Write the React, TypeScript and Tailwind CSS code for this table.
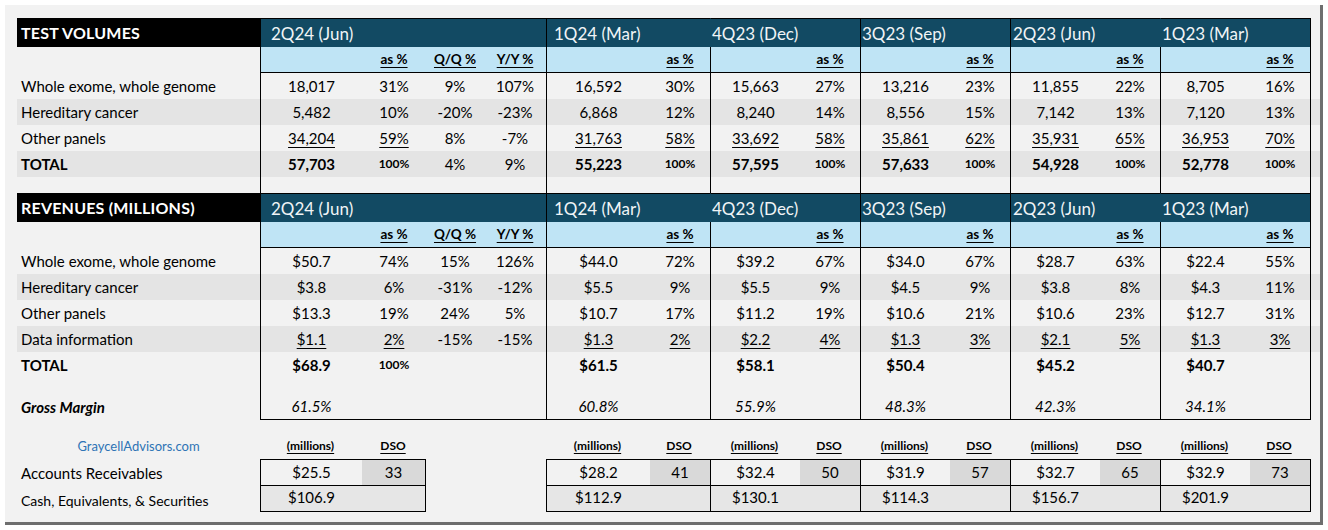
import React from 'react';

type Cell = { t: string; cls?: string };

const GROUPS = [
  { name: '2Q24 (Jun)', w: 'w-[286px]', cols: ['w-[101px]', 'w-[64px]', 'w-[58px]', 'w-[62px]'], hpad: 'pl-[10px]', hb: 'border-l-black', last: false },
  { name: '1Q24 (Mar)', w: 'w-[164px]', cols: ['w-[103px]', 'w-[60px]'], hpad: 'pl-[7px]', hb: 'border-l-black', last: false },
  { name: '4Q23 (Dec)', w: 'w-[150px]', cols: ['w-[89px]', 'w-[60px]'], hpad: 'pl-[1px]', hb: 'border-l-[#124a63]', last: false },
  { name: '3Q23 (Sep)', w: 'w-[150px]', cols: ['w-[89px]', 'w-[60px]'], hpad: 'pl-[1px]', hb: 'border-l-black', last: false },
  { name: '2Q23 (Jun)', w: 'w-[150px]', cols: ['w-[89px]', 'w-[60px]'], hpad: 'pl-[2px]', hb: 'border-l-black', last: false },
  { name: '1Q23 (Mar)', w: 'w-[151px]', cols: ['w-[89px]', 'w-[60px]'], hpad: 'pl-[1px]', hb: 'border-l-[#124a63]', last: true },
];

const U = 'underline underline-offset-[3px] decoration-1';
const SMB = 'font-bold text-[12px]';

function Row({
  h,
  band,
  label,
  labelCls = '',
  data,
  bottom = false,
}: {
  h: string;
  band?: boolean;
  label?: string;
  labelCls?: string;
  data?: (Cell | undefined)[][];
  bottom?: boolean;
}) {
  return (
    <div className={`flex ${h} ${band ? 'bg-[#e4e4e4]' : ''}`}>
      <div className={`w-[243px] flex items-center pl-[4px] ${labelCls}`}>{label}</div>
      {GROUPS.map((g, gi) => (
        <div
          key={gi}
          className={`${g.w} flex border-l border-black ${g.last ? 'border-r' : ''} ${bottom ? 'border-b' : ''}`}
        >
          {g.cols.map((c, ci) => {
            const cell = data?.[gi]?.[ci];
            return (
              <div key={ci} className={`${c} flex items-center justify-center ${cell?.cls ?? ''}`}>
                {cell?.t}
              </div>
            );
          })}
        </div>
      ))}
    </div>
  );
}

function HeaderRow({ title }: { title: string }) {
  return (
    <div className="flex h-[29px]">
      <div className="w-[243px] bg-black text-white font-bold text-[16px] flex items-center pl-[4px] tracking-[0.2px]">
        {title}
      </div>
      {GROUPS.map((g, gi) => (
        <div
          key={gi}
          className={`${g.w} bg-[#124a63] text-[#f0f4f6] text-[17px] flex items-center border-t border-t-black border-l ${g.hb} ${g.hpad} ${g.last ? 'border-r border-r-black' : ''}`}
        >
          {g.name}
        </div>
      ))}
    </div>
  );
}

function SubRow() {
  const hd = 'font-bold text-[13.5px] ' + U;
  return (
    <div className="flex h-[26px]">
      <div className="w-[243px]" />
      {GROUPS.map((g, gi) => (
        <div
          key={gi}
          className={`${g.w} flex bg-[#bfe4f5] border-l border-b border-black ${g.last ? 'border-r' : ''}`}
        >
          {g.cols.map((c, ci) => (
            <div key={ci} className={`${c} flex items-center justify-center pt-[1px]`}>
              {ci === 1 ? <span className={hd}>as %</span> : null}
              {ci === 2 ? <span className={hd}>Q/Q %</span> : null}
              {ci === 3 ? <span className={hd}>Y/Y %</span> : null}
            </div>
          ))}
        </div>
      ))}
    </div>
  );
}

const c = (t: string, cls?: string): Cell => ({ t, cls });

const tv1 = [
  [c('18,017'), c('31%'), c('9%'), c('107%')],
  [c('16,592'), c('30%')],
  [c('15,663'), c('27%')],
  [c('13,216'), c('23%')],
  [c('11,855'), c('22%')],
  [c('8,705'), c('16%')],
];
const tv2 = [
  [c('5,482'), c('10%'), c('-20%'), c('-23%')],
  [c('6,868'), c('12%')],
  [c('8,240'), c('14%')],
  [c('8,556'), c('15%')],
  [c('7,142'), c('13%')],
  [c('7,120'), c('13%')],
];
const tv3 = [
  [c('34,204', U), c('59%', U), c('8%'), c('-7%')],
  [c('31,763', U), c('58%', U)],
  [c('33,692', U), c('58%', U)],
  [c('35,861', U), c('62%', U)],
  [c('35,931', U), c('65%', U)],
  [c('36,953', U), c('70%', U)],
];
const tvT = [
  [c('57,703', 'font-bold'), c('100%', SMB), c('4%'), c('9%')],
  [c('55,223', 'font-bold'), c('100%', SMB)],
  [c('57,595', 'font-bold'), c('100%', SMB)],
  [c('57,633', 'font-bold'), c('100%', SMB)],
  [c('54,928', 'font-bold'), c('100%', SMB)],
  [c('52,778', 'font-bold'), c('100%', SMB)],
];

const rv1 = [
  [c('$50.7'), c('74%'), c('15%'), c('126%')],
  [c('$44.0'), c('72%')],
  [c('$39.2'), c('67%')],
  [c('$34.0'), c('67%')],
  [c('$28.7'), c('63%')],
  [c('$22.4'), c('55%')],
];
const rv2 = [
  [c('$3.8'), c('6%'), c('-31%'), c('-12%')],
  [c('$5.5'), c('9%')],
  [c('$5.5'), c('9%')],
  [c('$4.5'), c('9%')],
  [c('$3.8'), c('8%')],
  [c('$4.3'), c('11%')],
];
const rv3 = [
  [c('$13.3'), c('19%'), c('24%'), c('5%')],
  [c('$10.7'), c('17%')],
  [c('$11.2'), c('19%')],
  [c('$10.6'), c('21%')],
  [c('$10.6'), c('23%')],
  [c('$12.7'), c('31%')],
];
const rv4 = [
  [c('$1.1', U), c('2%', U), c('-15%'), c('-15%')],
  [c('$1.3', U), c('2%', U)],
  [c('$2.2', U), c('4%', U)],
  [c('$1.3', U), c('3%', U)],
  [c('$2.1', U), c('5%', U)],
  [c('$1.3', U), c('3%', U)],
];
const rvT = [
  [c('$68.9', 'font-bold'), c('100%', SMB)],
  [c('$61.5', 'font-bold')],
  [c('$58.1', 'font-bold')],
  [c('$50.4', 'font-bold')],
  [c('$45.2', 'font-bold')],
  [c('$40.7', 'font-bold')],
];
const gm = ['61.5%', '60.8%', '55.9%', '48.3%', '42.3%', '34.1%'].map((t) => [c(t, 'italic')]);

const AR = [
  ['$25.5', '33', '$106.9'],
  ['$28.2', '41', '$112.9'],
  ['$32.4', '50', '$130.1'],
  ['$31.9', '57', '$114.3'],
  ['$32.7', '65', '$156.7'],
  ['$32.9', '73', '$201.9'],
];

function Box({ w, cols, d, cls }: { w: string; cols: string[]; d: string[]; cls: string }) {
  return (
    <div className={`${w} flex flex-col border-t border-b border-l border-black ${cls}`}>
      <div className="flex h-[26px] border-b border-black">
        <div className={`${cols[0]} flex items-center justify-center`}>{d[0]}</div>
        <div className="flex-1 flex items-center justify-center bg-[#d9d9d9]">{d[1]}</div>
      </div>
      <div className="flex h-[25px] bg-[#e6e6e6]">
        <div className={`${cols[0]} flex items-center justify-center pb-[2px]`}>{d[2]}</div>
      </div>
    </div>
  );
}

export default function App() {
  return (
    <div className="w-[1328px] h-[530px] bg-white overflow-hidden font-[Lato,sans-serif] text-[15px] leading-none text-black">
      <div className="ml-[5px] mt-[5px] w-[1318px] h-[520px] bg-[#f2f2f2] border-r-[3px] border-b-[3px] border-[#6e6e6e] pl-[12px] pt-[13px]">
        <HeaderRow title="TEST VOLUMES" />
        <SubRow />
        <Row h="h-[26px]" label="Whole exome, whole genome" data={tv1} />
        <Row h="h-[26px]" band label="Hereditary cancer" data={tv2} />
        <Row h="h-[26px]" label="Other panels" data={tv3} />
        <Row h="h-[26px]" band label="TOTAL" labelCls="font-bold" data={tvT} />
        <Row h="h-[16px]" />
        <HeaderRow title="REVENUES (MILLIONS)" />
        <SubRow />
        <Row h="h-[26px]" label="Whole exome, whole genome" data={rv1} />
        <Row h="h-[26px]" band label="Hereditary cancer" data={rv2} />
        <Row h="h-[26px]" label="Other panels" data={rv3} />
        <Row h="h-[26px]" band label="Data information" data={rv4} />
        <Row h="h-[26px]" label="TOTAL" labelCls="font-bold" data={rvT} />
        <Row h="h-[16px]" />
        <Row h="h-[26px]" label="Gross Margin" labelCls="font-bold italic" data={gm} bottom />

        <div className="h-[13px]" />
        <div className="flex h-[26px]">
          <div className="w-[243px] flex items-center justify-center text-[13px] text-[#2e74b5]">
            GraycellAdvisors.com
          </div>
          {GROUPS.map((g, gi) => (
            <div key={gi} className={`${g.w} flex`}>
              <div className={`${g.cols[0]} flex items-center justify-center`}>
                <span className={`font-bold text-[12px] ${U}`}>(millions)</span>
              </div>
              <div className={`${g.cols[1]} flex items-center justify-center`}>
                <span className={`font-bold text-[12px] ${U}`}>DSO</span>
              </div>
            </div>
          ))}
        </div>
        <div className="flex">
          <div className="w-[243px] flex flex-col">
            <div className="h-[27px] flex items-center pl-[4px] pt-[1px]">Accounts Receivables</div>
            <div className="h-[26px] flex items-center pl-[4px] pt-[4px] text-[14px]">Cash, Equivalents, &amp; Securities</div>
          </div>
          <Box w="w-[166px]" cols={['w-[101px]']} d={AR[0]} cls="border-r" />
          <div className="w-[120px]" />
          <Box w="w-[164px]" cols={['w-[103px]']} d={AR[1]} cls="" />
          <Box w="w-[150px]" cols={['w-[89px]']} d={AR[2]} cls="" />
          <Box w="w-[150px]" cols={['w-[89px]']} d={AR[3]} cls="" />
          <Box w="w-[150px]" cols={['w-[89px]']} d={AR[4]} cls="" />
          <Box w="w-[151px]" cols={['w-[89px]']} d={AR[5]} cls="border-r" />
        </div>
      </div>
    </div>
  );
}
